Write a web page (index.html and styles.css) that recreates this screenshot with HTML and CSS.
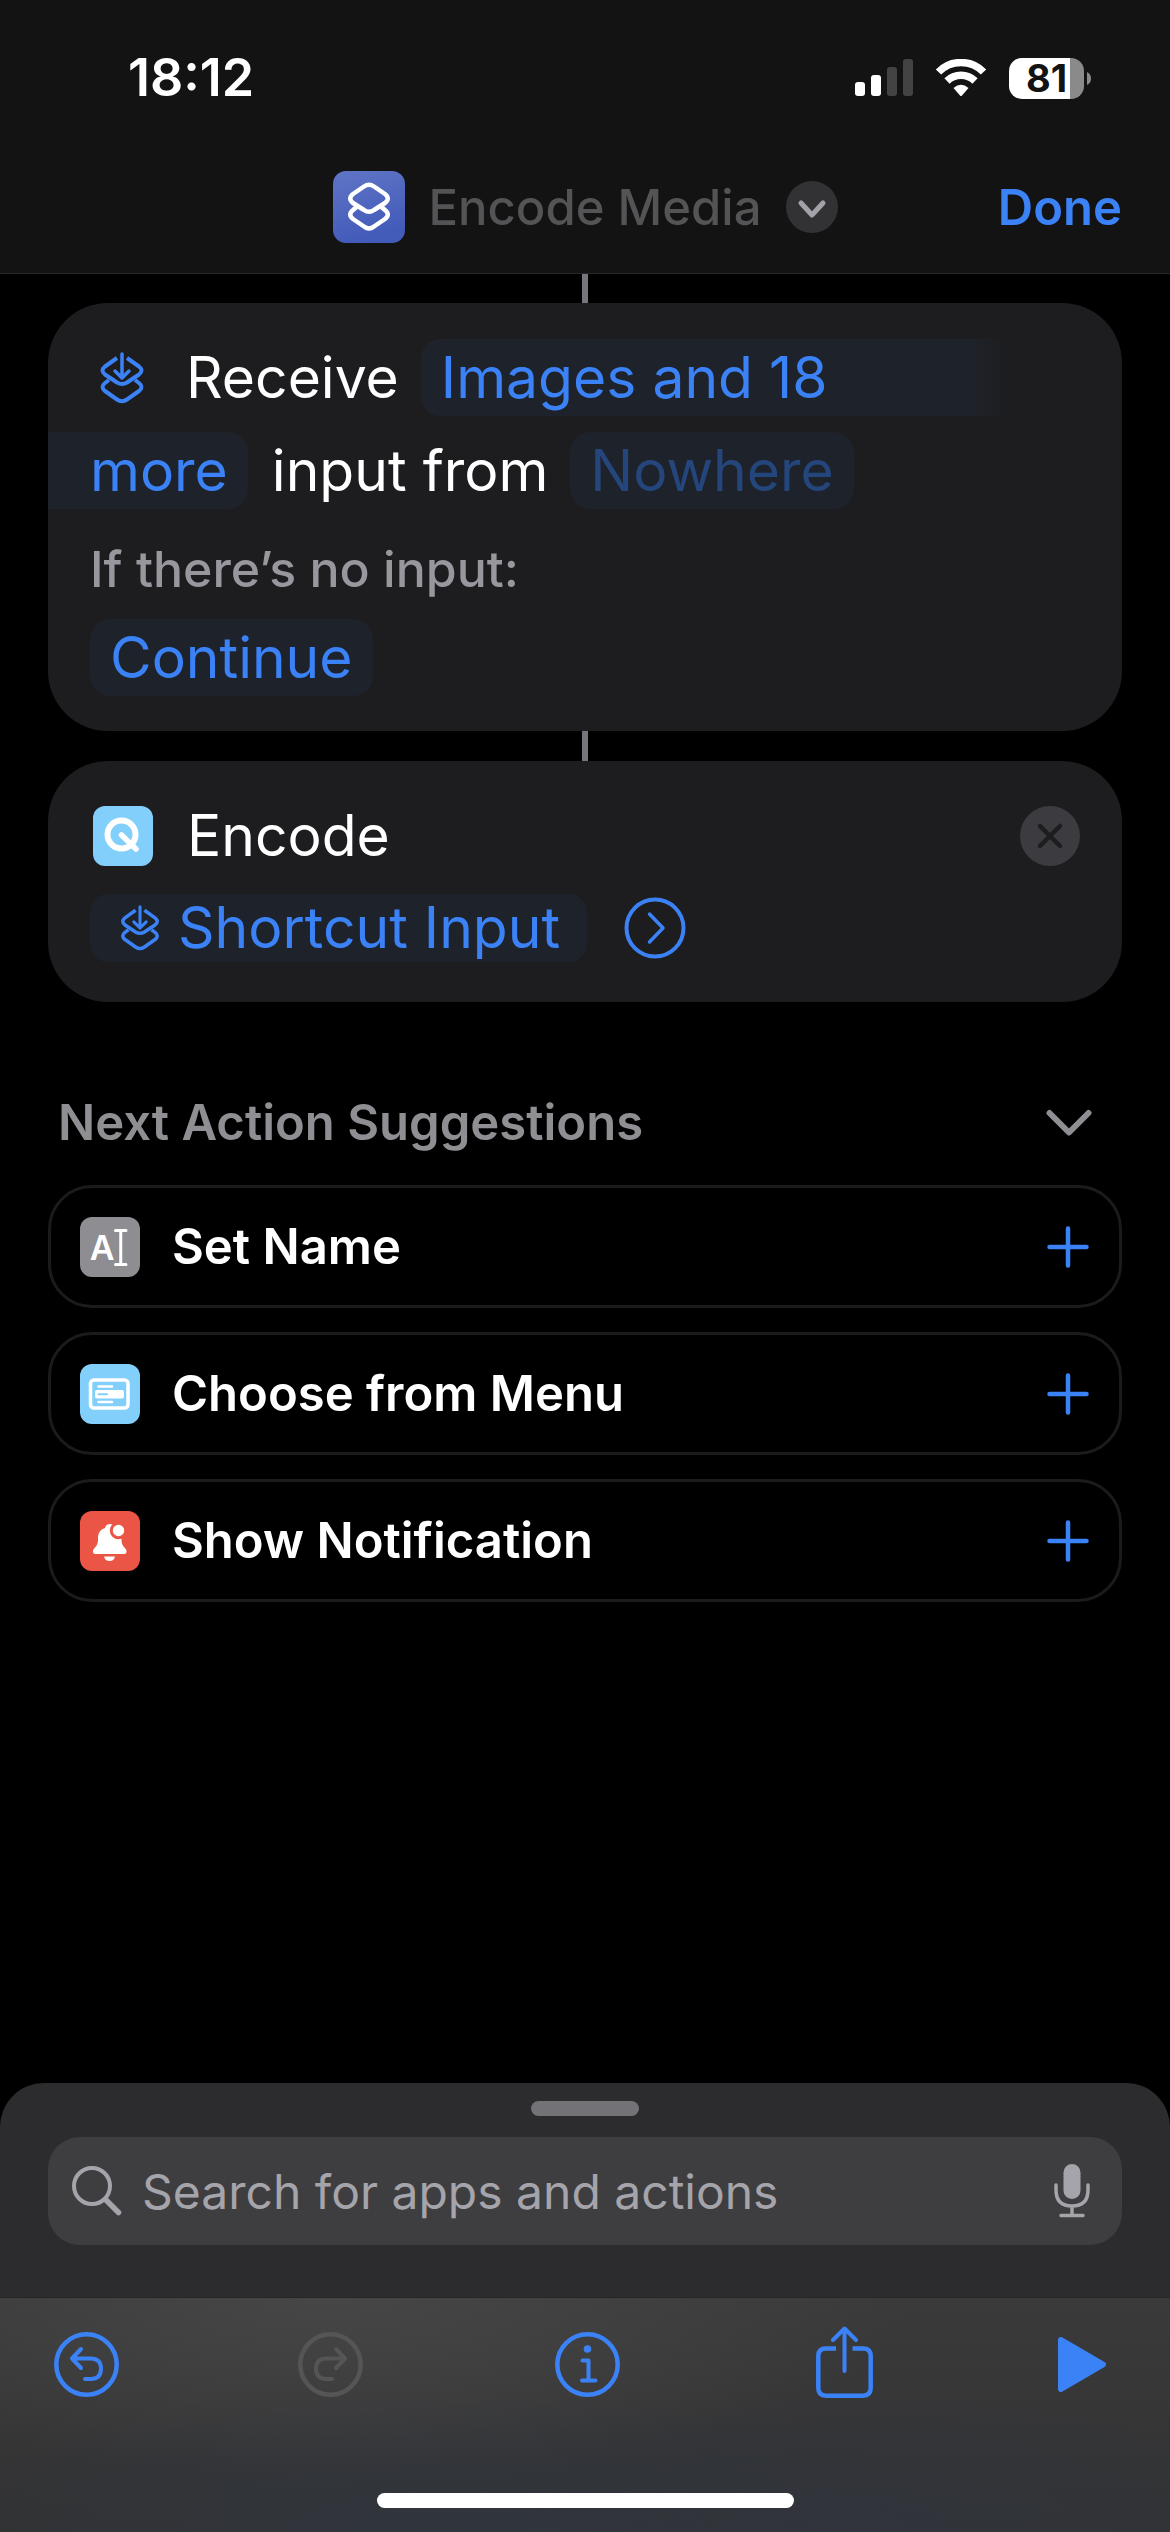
FILE: index.html
```html
<!DOCTYPE html>
<html lang="en">
<head>
    <meta charset="UTF-8">
    <meta name="viewport" content="width=device-width, initial-scale=1.0">
    <title>Encode Media</title>
    <link rel="stylesheet" href="styles.css">
</head>
<body>
    <!-- Shared shapes -->
    <svg class="defs" aria-hidden="true">
        <symbol id="shortcut-input" viewBox="0 0 44 52">
            <g fill="none" stroke="currentColor" stroke-width="4" stroke-linecap="butt" stroke-linejoin="round">
                <path d="M17 6 L5 14.500 Q0 18.500 5 22.500 L17 30.500 Q22 33.500 27 30.500 L39 22.500 Q44 18.500 39 14.500 L27 6"/>
                <path d="M9 28 L5 31 Q0 35 5 39 L17 47.500 Q22 51 27 47.500 L39 39 Q44 35 39 31 L35 28"/>
                <path stroke-linecap="round" stroke-width="3.500" d="M22 2 V25 M15 19 L22 26 L29 19"/>
            </g>
        </symbol>
        <symbol id="plus" viewBox="0 0 42 42">
            <path d="M21 2.500 V39.500 M2.500 21 H39.500" stroke="currentColor" stroke-width="4.500" stroke-linecap="round"/>
        </symbol>
    </svg>

    <header class="header">
        <div class="status">
            <time class="clock">18:12</time>
            <div class="indicators">
                <svg width="58" height="38" viewBox="0 0 58 38" fill="#fff" aria-label="Signal">
                    <rect x="0" y="23" width="10" height="14" rx="3"/>
                    <rect x="16" y="16" width="10" height="21" rx="3"/>
                    <rect x="32" y="8" width="10" height="29" rx="3" fill="#434343"/>
                    <rect x="48" y="0" width="10" height="37" rx="3" fill="#434343"/>
                </svg>
                <svg width="52" height="38" viewBox="0 0 52 38" fill="none" stroke="#fff" aria-label="Wi-Fi">
                    <path d="M3.500 13 A31.500 31.500 0 0 1 48.500 13" stroke-width="7.500"/>
                    <path d="M12 22 A20 20 0 0 1 40 22" stroke-width="7.500"/>
                    <path d="M18.500 29 Q26 22.500 33.500 29 L27 36.500 Q26 37.500 25 36.500 Z" fill="#fff" stroke="none"/>
                </svg>
                <div class="battery">
                    <span class="level">81</span>
                    <svg width="4" height="13" viewBox="0 0 4 13"><path d="M0 0 Q4 2 4 6.500 Q4 11 0 13 Z" fill="#8a8a8a"/></svg>
                </div>
            </div>
        </div>
        <nav class="nav">
            <button class="title" type="button">
                <svg class="app-icon" width="72" height="72" viewBox="0 0 72 72" aria-hidden="true">
                    <defs>
                        <linearGradient id="indigo" x1="0" y1="0" x2="0.300" y2="1">
                            <stop offset="0" stop-color="#6075c6"/>
                            <stop offset="1" stop-color="#435bb9"/>
                        </linearGradient>
                    </defs>
                    <rect width="72" height="72" rx="13" fill="url(#indigo)"/>
                    <g fill="none" stroke="#fff" stroke-width="4.500" stroke-linejoin="round">
                        <path d="M31 15.500 Q36 12 41 15.500 L52 23 Q57.500 27.500 52 32 L41 39 Q36 42.500 31 39 L20 32 Q14.500 27.500 20 23 Z"/>
                        <path d="M23.500 36 L20 39 Q14.500 43.500 20 48 L31 55.500 Q36 59.500 41 55.500 L52 48 Q57.500 43.500 52 39 L48.500 36"/>
                    </g>
                </svg>
                <span>Encode Media</span>
                <svg width="52" height="52" viewBox="0 0 52 52" aria-hidden="true">
                    <circle cx="26" cy="26" r="26" fill="#323234"/>
                    <path d="M15 22 L26 34 L37 22" fill="none" stroke="#a3a2a9" stroke-width="5" stroke-linecap="round" stroke-linejoin="round"/>
                </svg>
            </button>
            <button class="done" type="button">Done</button>
        </nav>
    </header>

    <main class="editor">
        <div class="connector"></div>
        <section class="card receive">
            <div class="line">
                <svg class="glyph" width="44" height="52"><use href="#shortcut-input"/></svg>
                <span class="word">Receive</span>
                <button class="pill fade" type="button">Images and 18</button>
            </div>
            <div class="line">
                <button class="pill rest" type="button">more</button>
                <span class="word">input from</span>
                <button class="pill dim" type="button">Nowhere</button>
            </div>
            <p class="hint">If there’s no input:</p>
            <button class="pill" type="button">Continue</button>
        </section>

        <div class="connector"></div>
        <section class="card encode">
            <div class="line">
                <svg class="tile" width="60" height="60" viewBox="0 0 60 60" aria-hidden="true">
                    <rect width="60" height="60" rx="12" fill="#83cffb"/>
                    <circle cx="28.500" cy="28.500" r="14" fill="none" stroke="#fff" stroke-width="6"/>
                    <path d="M28.500 29 L43 43" stroke="#fff" stroke-width="5.500" stroke-linecap="round"/>
                </svg>
                <span class="word">Encode</span>
                <button class="icon-button remove" type="button" aria-label="Remove action">
                    <svg width="60" height="60" viewBox="0 0 60 60">
                        <circle cx="30" cy="30" r="30" fill="#3c3b40"/>
                        <path d="M20 20 L40 40 M40 20 L20 40" stroke="#1d1d1f" stroke-width="4.500" stroke-linecap="round"/>
                    </svg>
                </button>
            </div>
            <div class="line">
                <button class="pill variable" type="button">
                    <svg width="40" height="46"><use href="#shortcut-input"/></svg>
                    <span>Shortcut Input</span>
                </button>
                <button class="icon-button" type="button" aria-label="Show more">
                    <svg width="62" height="62" viewBox="0 0 62 62" fill="none" stroke="currentColor">
                        <circle cx="31" cy="31" r="28.500" stroke-width="4"/>
                        <path d="M25.500 17 L39 31 L25.500 45" stroke-width="3.500" stroke-linecap="round" stroke-linejoin="round"/>
                    </svg>
                </button>
            </div>
        </section>

        <section class="suggestions">
            <div class="heading">
                <h2>Next Action Suggestions</h2>
                <button class="icon-button collapse" type="button" aria-label="Collapse suggestions">
                    <svg width="46" height="28" viewBox="0 0 46 28">
                        <path d="M3.500 4 L23 23.500 L42.500 4" fill="none" stroke="currentColor" stroke-width="6" stroke-linecap="round" stroke-linejoin="round"/>
                    </svg>
                </button>
            </div>
            <button class="suggestion" type="button">
                <svg width="60" height="60" viewBox="0 0 60 60" aria-hidden="true">
                    <rect width="60" height="60" rx="12" fill="#8e8d92"/>
                    <text class="letter" x="22" y="43" text-anchor="middle">A</text>
                    <path d="M35.500 13.500 H46 M40.750 13.500 V47.500 M35.500 47.500 H46" fill="none" stroke="#fff" stroke-width="3" stroke-linecap="round"/>
                </svg>
                <span>Set Name</span>
                <svg class="add" width="42" height="42"><use href="#plus"/></svg>
            </button>
            <button class="suggestion" type="button">
                <svg width="60" height="60" viewBox="0 0 60 60" aria-hidden="true">
                    <rect width="60" height="60" rx="12" fill="#83cffb"/>
                    <rect x="10.500" y="16" width="37.500" height="28" rx="3.500" fill="none" stroke="#fff" stroke-width="3.500"/>
                    <path d="M18.500 22.500 H32 M18.500 38 H32" stroke="#fff" stroke-width="2.500" stroke-linecap="round"/>
                    <rect x="15" y="26" width="29" height="8.500" rx="2" fill="#fff"/>
                    <path d="M18.500 30.200 H27" stroke="#83cffb" stroke-width="2" stroke-linecap="round"/>
                </svg>
                <span>Choose from Menu</span>
                <svg class="add" width="42" height="42"><use href="#plus"/></svg>
            </button>
            <button class="suggestion" type="button">
                <svg width="60" height="60" viewBox="0 0 60 60" aria-hidden="true">
                    <rect width="60" height="60" rx="12" fill="#eb5545"/>
                    <path d="M15.500 43 Q13 43 13 40.500 Q13 38.500 15 36.500 Q18 33.500 18 29 V26 Q18.500 19 25 17 Q26 13 30 13 Q34 13 34.500 17 Q41 19 41.500 26 V29 Q41.500 33.500 44.500 36.500 Q46.500 38.500 46.500 40.500 Q46.500 43 44 43 Z" fill="#fff"/>
                    <path d="M24 45.500 H35 Q34 50 29.500 50 Q25 50 24 45.500 Z" fill="#fff"/>
                    <circle cx="38.500" cy="19.500" r="7.200" fill="#fff" stroke="#eb5545" stroke-width="3"/>
                </svg>
                <span>Show Notification</span>
                <svg class="add" width="42" height="42"><use href="#plus"/></svg>
            </button>
        </section>
    </main>

    <footer class="bottom">
        <div class="sheet">
            <div class="grabber"></div>
            <label class="search">
                <svg width="50" height="50" viewBox="0 0 50 50" fill="none" stroke="currentColor" aria-hidden="true">
                    <circle cx="20" cy="20" r="18" stroke-width="4"/>
                    <path d="M33.500 33.500 L46.500 46.500" stroke-width="5.500" stroke-linecap="round"/>
                </svg>
                <input type="text" placeholder="Search for apps and actions" aria-label="Search for apps and actions">
                <svg width="36" height="54" viewBox="0 0 36 54" fill="none" stroke="currentColor" stroke-width="3.500" stroke-linecap="round" aria-hidden="true">
                    <rect x="9.500" y="0" width="17" height="35" rx="8.500" fill="currentColor" stroke="none"/>
                    <path d="M2 21 V26 Q2 42 18 42 Q34 42 34 26 V21 M18 42 V51 M7 51.500 H29"/>
                </svg>
            </label>
        </div>
        <div class="toolbar">
            <div class="tools">
                <button class="icon-button" type="button" aria-label="Undo">
                    <svg width="65" height="65" viewBox="0 0 65 65" fill="none" stroke="currentColor" stroke-width="4" stroke-linecap="round" stroke-linejoin="round">
                        <circle cx="32.500" cy="32.500" r="30.200" stroke-width="4.500"/>
                        <path d="M27 17 L18 26.500 L27 36 M18.500 26.500 H36.500 Q47 26.500 47 36.500 Q47 47 36.500 47 H31"/>
                    </svg>
                </button>
                <button class="icon-button" type="button" aria-label="Redo" disabled>
                    <svg width="65" height="65" viewBox="0 0 65 65" fill="none" stroke="currentColor" stroke-width="4" stroke-linecap="round" stroke-linejoin="round">
                        <circle cx="32.500" cy="32.500" r="30.200" stroke-width="4.500"/>
                        <path d="M38 17 L47 26.500 L38 36 M46.500 26.500 H28.500 Q18 26.500 18 36.500 Q18 47 28.500 47 H34"/>
                    </svg>
                </button>
                <button class="icon-button" type="button" aria-label="Details">
                    <svg width="65" height="65" viewBox="0 0 65 65" fill="none" stroke="currentColor" stroke-width="4" stroke-linecap="round" stroke-linejoin="round">
                        <circle cx="32.500" cy="32.500" r="30.200" stroke-width="4.500"/>
                        <circle cx="32.500" cy="17" r="3.800" fill="currentColor" stroke="none"/>
                        <path d="M27.500 28.500 H33.500 V48.500 M27 48.500 H40.500"/>
                    </svg>
                </button>
                <button class="icon-button" type="button" aria-label="Share">
                    <svg width="57" height="77" viewBox="0 0 57 77" fill="none" stroke="currentColor" stroke-width="4.500" stroke-linejoin="round">
                        <path d="M20 22.500 H10 Q2.300 22.500 2.300 30 V62 Q2.300 69.700 10 69.700 H47 Q54.700 69.700 54.700 62 V30 Q54.700 22.500 47 22.500 H36.500"/>
                        <path d="M28.500 3 V45 M17 14 L28.500 2.500 L40 14" stroke-width="4" stroke-linecap="round"/>
                    </svg>
                </button>
                <button class="icon-button" type="button" aria-label="Run">
                    <svg width="48" height="55" viewBox="0 0 48 55">
                        <path d="M3 3 L45 27.500 L3 52 Z" fill="currentColor" stroke="currentColor" stroke-width="6" stroke-linejoin="round"/>
                    </svg>
                </button>
            </div>
            <div class="home-indicator"></div>
        </div>
    </footer>
</body>
</html>
```
FILE: styles.css
```css
* {
    box-sizing: border-box;
}

body {
    display: flex;
    flex-direction: column;
    min-height: 100vh;
    margin: 0;
    background: #000;
    color: #fff;
    font-family: Inter, "Liberation Sans", sans-serif;
    font-size: 49px;
}

button {
    margin: 0;
    padding: 0;
    border: 0;
    background: none;
    color: #3b82f7;
    font: inherit;
    white-space: nowrap;
}

svg {
    display: block;
    flex: none;
}

.defs {
    position: absolute;
    width: 0;
    height: 0;
}

/* Header */

.header {
    background: #131313;
    border-bottom: 1px solid #272728;
}

.status {
    display: flex;
    justify-content: space-between;
    align-items: center;
    padding: 48px 79px 0 128px;
    line-height: 60px;
}

.clock {
    font-weight: 600;
    font-size: 52px;
}

.indicators {
    display: flex;
    align-items: center;
    gap: 22px;
}

.battery {
    display: flex;
    align-items: center;
    gap: 3px;
}

.level {
    width: 75px;
    border-radius: 13px;
    background: linear-gradient(90deg, #fff 82%, #8a8a8a 82%);
    color: #131313;
    font-size: 38px;
    font-weight: 700;
    line-height: 41px;
    text-align: center;
}

.nav {
    display: grid;
    grid-template-columns: 1fr auto 1fr;
    align-items: center;
    padding: 63px 48px 30px;
}

.title {
    display: flex;
    grid-column: 2;
    align-items: center;
    gap: 24px;
    color: #545456;
    font-weight: 500;
}

.done {
    justify-self: end;
    font-weight: 600;
}

/* Action cards */

.editor {
    flex: 1;
    padding: 0 48px 48px;
}

.connector {
    width: 6px;
    height: 30px;
    margin: 0 auto;
    background: #76767e;
}

.connector:first-child {
    height: 29px;
}

.card {
    overflow: hidden;
    border-radius: 60px;
    background: #1d1d1f;
    font-size: 57px;
}

.line {
    display: flex;
    align-items: center;
}

.receive {
    padding: 36px 42px 35px;
}

.receive .line {
    margin-bottom: 16px;
}

.glyph {
    margin: 0 42px 0 10px;
    color: #3b82f7;
}

.word {
    margin-right: 22px;
}

.pill {
    padding: 0 20px;
    border-radius: 20px;
    background: #1e222a;
    line-height: 77px;
}

.fade {
    padding-right: 180px;
    border-radius: 20px 0 0 20px;
    background: linear-gradient(90deg, #1e222a calc(100% - 36px), #1d1d1f);
}

.rest {
    margin: 0 24px 0 -42px;
    padding-left: 42px;
    border-radius: 0 20px 20px 0;
}

.dim {
    color: #25467d;
}

.hint {
    margin: 29px 0 19px;
    color: #98979e;
    font-size: 50px;
    font-weight: 500;
    line-height: 62px;
}

.encode {
    padding: 45px 42px 40px;
}

.encode .line + .line {
    margin-top: 28px;
}

.encode .word {
    line-height: 60px;
}

.tile {
    margin: 0 34px 0 3px;
}

.icon-button {
    display: flex;
    align-items: center;
}

.remove {
    margin-left: auto;
}

.variable {
    display: flex;
    align-items: center;
    gap: 18px;
    margin-right: 37px;
    padding: 0 27px 0 30px;
    border-radius: 18px;
    line-height: 68px;
}

/* Suggestions */

.suggestions {
    display: flex;
    flex-direction: column;
    gap: 24px;
    margin-top: 91px;
}

.heading {
    display: flex;
    justify-content: space-between;
    align-items: center;
    margin-bottom: 8px;
    padding: 0 30px 0 10px;
    color: #8e8e93;
}

.heading h2 {
    margin: 0;
    font-size: 49px;
    font-weight: 600;
    line-height: 60px;
}

.collapse {
    color: #8e8e93;
}

.suggestion {
    display: flex;
    align-items: center;
    gap: 32px;
    height: 123px;
    padding: 0 30px 0 29px;
    border: 3px solid #1b1b1c;
    border-radius: 44px;
    color: #fff;
    font-weight: 600;
}

.letter {
    fill: #fff;
    font-size: 34px;
    font-weight: 600;
}

.add {
    margin-left: auto;
    color: #3b82f7;
}

/* Bottom sheet and toolbar */

.sheet {
    padding: 18px 48px 52px;
    border-bottom: 1px solid #272728;
    border-radius: 44px 44px 0 0;
    background: #2c2c2e;
}

.grabber {
    width: 108px;
    height: 15px;
    margin: 0 auto 21px;
    border-radius: 8px;
    background: #727277;
}

.search {
    display: flex;
    align-items: center;
    height: 108px;
    padding: 0 32px 0 24px;
    border-radius: 32px;
    background: #3e3e40;
    color: #a5a4ab;
    font-size: 48px;
}

.search input {
    flex: 1;
    min-width: 0;
    margin: 0 20px;
    padding: 0;
    border: 0;
    outline: 0;
    background: none;
    color: #fff;
    font: inherit;
}

.search input::placeholder {
    color: #a5a4ab;
    opacity: 1;
}

.toolbar {
    padding: 28px 0 24px;
    background:
        radial-gradient(ellipse 50% 75% at 28% 0, #464647, transparent),
        radial-gradient(ellipse 45% 60% at 38% 100%, #30353d, transparent),
        radial-gradient(ellipse 35% 60% at 75% 100%, #30343b, transparent),
        linear-gradient(#3a3a3b, #323233);
}

.tools {
    display: grid;
    grid-template-columns: 244fr 257fr 261fr 242fr 48px;
    align-items: center;
    justify-items: start;
    margin-bottom: 90px;
    padding: 0 64px 0 54px;
}

.tools button:disabled {
    color: #555556;
}

.home-indicator {
    width: 417px;
    height: 15px;
    margin: 0 auto;
    border-radius: 8px;
    background: #fff;
}
```
